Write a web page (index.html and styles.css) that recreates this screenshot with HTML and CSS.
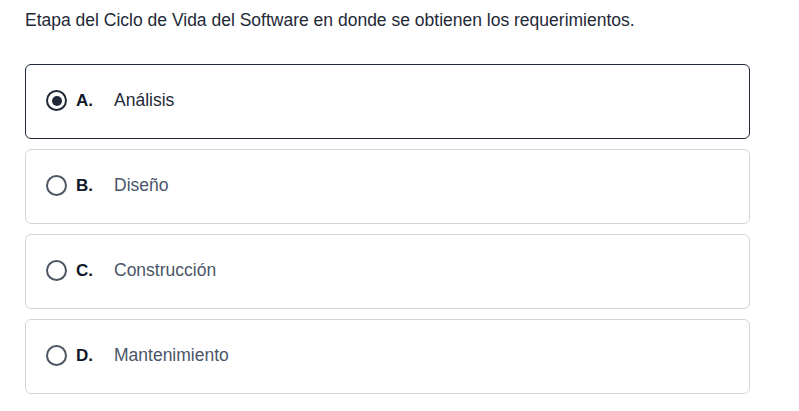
FILE: index.html
```html
<!DOCTYPE html>
<html lang="es">
<head>
<meta charset="utf-8">
<link rel="stylesheet" href="styles.css">
</head>
<body>
<div class="page">
  <p class="question">Etapa del Ciclo de Vida del Software en donde se obtienen los requerimientos.</p>
  <div class="options">
    <label class="option selected">
      <span class="radio"><span class="dot"></span></span>
      <span class="letter">A.</span>
      <span class="text">Análisis</span>
    </label>
    <label class="option">
      <span class="radio"></span>
      <span class="letter">B.</span>
      <span class="text">Diseño</span>
    </label>
    <label class="option">
      <span class="radio"></span>
      <span class="letter">C.</span>
      <span class="text">Construcción</span>
    </label>
    <label class="option">
      <span class="radio"></span>
      <span class="letter">D.</span>
      <span class="text">Mantenimiento</span>
    </label>
  </div>
</div>
</body>
</html>
```
FILE: styles.css
```css
* { box-sizing: border-box; }
html, body { margin: 0; background: #fff; }
body { font-family: "Liberation Sans", Arial, sans-serif; }
.page { padding: 8px 49px 0 25px; }
.question {
  margin: 0 0 32px 0;
  font-size: 17.5px;
  line-height: 24px;
  color: #1f2937;
}
.options { display: flex; flex-direction: column; gap: 10px; }
.option {
  display: flex;
  align-items: center;
  height: 75px;
  padding-left: 20px;
  padding-bottom: 2px;
  border: 1px solid #d1d5db;
  border-radius: 6px;
  background: #fff;
}
.option.selected { border-color: #1f2937; }
.radio {
  width: 21px;
  height: 21px;
  border: 2.5px solid #4b5563;
  border-radius: 50%;
  display: flex;
  align-items: center;
  justify-content: center;
  flex: none;
}
.selected .radio { border-color: #1f2937; }
.dot { width: 10px; height: 10px; border-radius: 50%; background: #1f2937; }
.letter {
  margin-left: 9px;
  width: 38px;
  font-weight: bold;
  font-size: 17px;
  color: #111827;
}
.text { font-size: 17.5px; color: #4a5568; }
.selected .text { color: #1f2937; }
```
